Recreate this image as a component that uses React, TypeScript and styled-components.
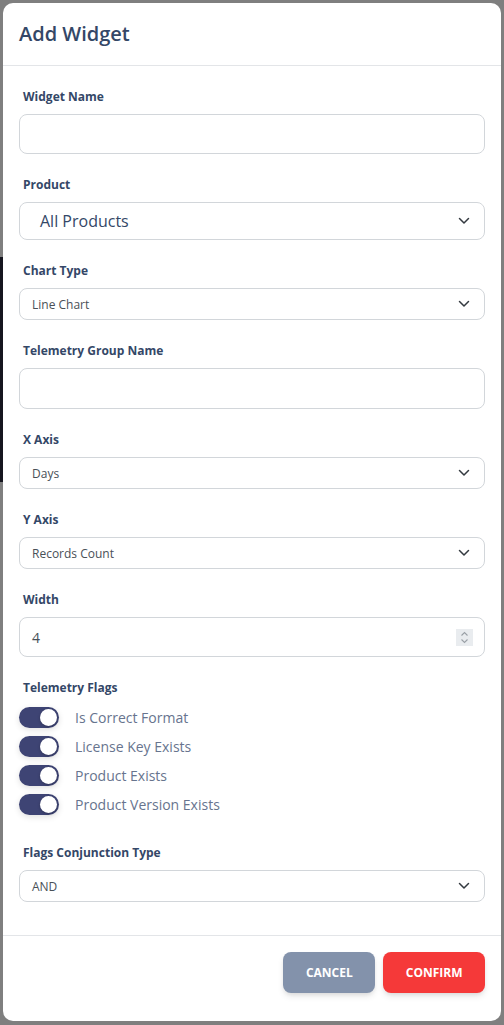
import React from "react";
import styled, { createGlobalStyle } from "styled-components";

const GlobalStyle = createGlobalStyle`
  html, body { margin: 0; padding: 0; }
  body {
    font-family: "Open Sans", "Noto Sans", Arial, sans-serif;
    background: #7f7f7f;
  }
  * { box-sizing: border-box; }
`;

const Backdrop = styled.div`
  min-height: 1025px;
  padding: 3px 3px 4px 3px;
  background-color: #7f7f7f;
  background-image: linear-gradient(
    to bottom,
    transparent 257px,
    #15151f 257px,
    #15151f 482px,
    transparent 482px
  );
  background-size: 3px 100%;
  background-repeat: no-repeat;
`;

const Modal = styled.div`
  background: #ffffff;
  border-radius: 10px;
  height: 1018px;
  display: flex;
  flex-direction: column;
  overflow: hidden;
`;

const Header = styled.div`
  padding: 16px 16px;
  border-bottom: 1px solid #e3e5e8;
`;

const Title = styled.h5`
  margin: 0;
  font-size: 20px;
  line-height: 30px;
  font-weight: 600;
  color: #344767;
`;

const Body = styled.div`
  flex: 1;
  display: flex;
  flex-direction: column;
  gap: 22px;
  padding: 22px 16px 0 16px;
`;

const Field = styled.div`
  display: flex;
  flex-direction: column;
  gap: 8px;
`;

const Label = styled.label`
  font-size: 12px;
  line-height: 18px;
  font-weight: 700;
  color: #344767;
  padding-left: 4px;
`;

const InputBox = styled.div<{ $h: number }>`
  height: ${(p) => p.$h}px;
  border: 1px solid #d2d6da;
  border-radius: 8px;
  background: #fff;
  display: flex;
  align-items: center;
  padding: 0 12px;
`;

const SelectBox = styled(InputBox)<{ $big?: boolean }>`
  padding: 0 ${(p) => (p.$big ? "14px 0 20px" : "14px 0 12px")};
  justify-content: space-between;
  font-size: ${(p) => (p.$big ? "16px" : "12px")};
  color: ${(p) => (p.$big ? "#344767" : "#495057")};
`;

const Value = styled.span`
  font-size: 14px;
  color: #495057;
  flex: 1;
`;

const Spinner = styled.div`
  width: 17px;
  height: 17px;
  background: #e9ecef;
  display: flex;
  align-items: center;
  justify-content: center;
  margin-right: -1px;
`;

const Toggles = styled.div`
  display: flex;
  flex-direction: column;
  margin-top: -2px;
  margin-bottom: 3px;
`;

const ToggleRow = styled.div`
  display: flex;
  align-items: center;
  height: 29px;
  gap: 16px;
`;

const Track = styled.span`
  width: 40px;
  height: 21px;
  border-radius: 11px;
  background: #3e4474;
  position: relative;
  flex-shrink: 0;
  box-shadow: 0 2px 6px rgba(0, 0, 0, 0.12);
`;

const Knob = styled.span`
  position: absolute;
  top: 2px;
  right: 2px;
  width: 17px;
  height: 17px;
  border-radius: 50%;
  background: #fff;
  box-shadow: 0 1px 3px rgba(0, 0, 0, 0.25);
`;

const ToggleLabel = styled.span`
  font-size: 14px;
  color: #67748e;
`;

const Footer = styled.div`
  border-top: 1px solid #e3e5e8;
  padding: 16px 16px 28px;
  display: flex;
  justify-content: flex-end;
  gap: 8px;
  margin-top: 9px;
`;

const Button = styled.button<{ $color: string }>`
  height: 41px;
  padding: 0 22.5px;
  border: none;
  border-radius: 8px;
  background: ${(p) => p.$color};
  color: #fff;
  font-family: "Open Sans", Arial, sans-serif;
  font-size: 12px;
  font-weight: 700;
  text-transform: uppercase;
  box-shadow: 0 4px 7px -1px rgba(0, 0, 0, 0.11), 0 2px 4px -1px rgba(0, 0, 0, 0.07);
`;

const Chevron = () => (
  <svg width="12" height="8" viewBox="0 0 12 8" fill="none">
    <path d="M1.5 1.5 L6 6 L10.5 1.5" stroke="#343a40" strokeWidth="1.5" strokeLinecap="round" strokeLinejoin="round" />
  </svg>
);

const SpinIcon = () => (
  <svg width="9" height="13" viewBox="0 0 9 13" fill="none">
    <path d="M1.5 4.5 L4.5 1.5 L7.5 4.5" stroke="#9aa0a6" strokeWidth="1.1" />
    <path d="M1.5 8.5 L4.5 11.5 L7.5 8.5" stroke="#9aa0a6" strokeWidth="1.1" />
  </svg>
);

const flags = ["Is Correct Format", "License Key Exists", "Product Exists", "Product Version Exists"];

export default function App() {
  return (
    <>
      <GlobalStyle />
      <Backdrop>
        <Modal>
          <Header>
            <Title>Add Widget</Title>
          </Header>
          <Body>
            <Field>
              <Label>Widget Name</Label>
              <InputBox $h={40} />
            </Field>
            <Field>
              <Label>Product</Label>
              <SelectBox $h={38} $big>
                <span>All Products</span>
                <Chevron />
              </SelectBox>
            </Field>
            <Field>
              <Label>Chart Type</Label>
              <SelectBox $h={32}>
                <span>Line Chart</span>
                <Chevron />
              </SelectBox>
            </Field>
            <Field>
              <Label>Telemetry Group Name</Label>
              <InputBox $h={41} />
            </Field>
            <Field>
              <Label>X Axis</Label>
              <SelectBox $h={32}>
                <span>Days</span>
                <Chevron />
              </SelectBox>
            </Field>
            <Field>
              <Label>Y Axis</Label>
              <SelectBox $h={32}>
                <span>Records Count</span>
                <Chevron />
              </SelectBox>
            </Field>
            <Field>
              <Label>Width</Label>
              <InputBox $h={40}>
                <Value>4</Value>
                <Spinner>
                  <SpinIcon />
                </Spinner>
              </InputBox>
            </Field>
            <Field>
              <Label>Telemetry Flags</Label>
              <Toggles>
                {flags.map((f) => (
                  <ToggleRow key={f}>
                    <Track>
                      <Knob />
                    </Track>
                    <ToggleLabel>{f}</ToggleLabel>
                  </ToggleRow>
                ))}
              </Toggles>
            </Field>
            <Field>
              <Label>Flags Conjunction Type</Label>
              <SelectBox $h={32}>
                <span>AND</span>
                <Chevron />
              </SelectBox>
            </Field>
          </Body>
          <Footer>
            <Button $color="#8392ab">Cancel</Button>
            <Button $color="#f53939">Confirm</Button>
          </Footer>
        </Modal>
      </Backdrop>
    </>
  );
}
